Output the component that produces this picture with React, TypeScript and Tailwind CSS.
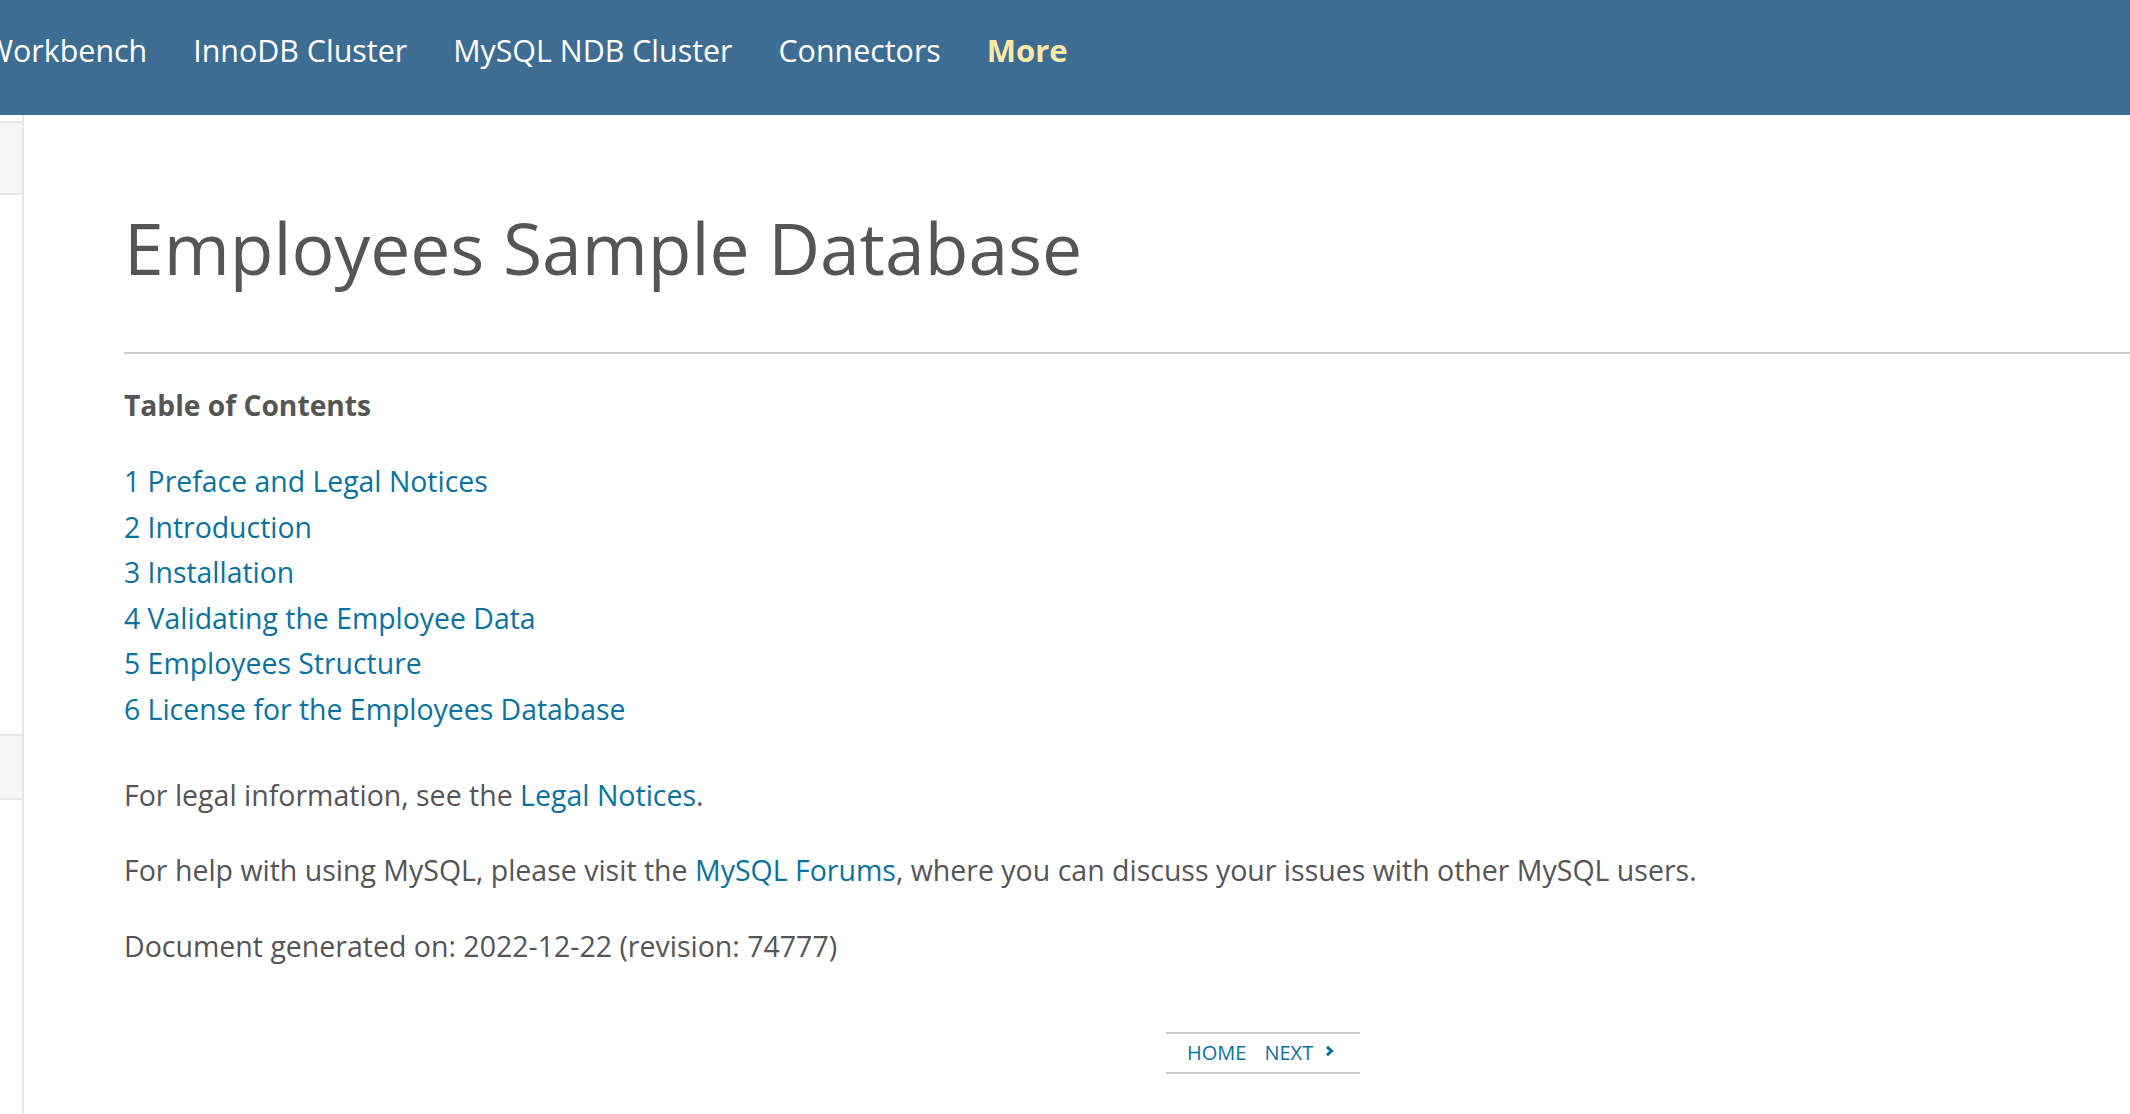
import React from 'react';

const navItems = ['Workbench', 'InnoDB Cluster', 'MySQL NDB Cluster', 'Connectors'];

const tocItems = [
  '1 Preface and Legal Notices',
  '2 Introduction',
  '3 Installation',
  '4 Validating the Employee Data',
  '5 Employees Structure',
  '6 License for the Employees Database',
];

export default function App() {
  return (
    <div className="min-h-[1114px] w-full overflow-hidden bg-white font-['Open_Sans',sans-serif]">
      {/* top nav */}
      <nav className="h-[115px] bg-[#3e6d94] pt-[30px]">
        <ul className="ml-[-15px] flex items-baseline gap-[46px] text-[30.4px] leading-[40px] text-white whitespace-nowrap">
          {navItems.map((item) => (
            <li key={item}>
              <a href="#">{item}</a>
            </li>
          ))}
          <li>
            <a href="#" className="text-[31px] font-bold text-[#fbeaa6]">
              More
            </a>
          </li>
        </ul>
      </nav>

      <div className="flex">
        {/* left sidebar (cut off) */}
        <aside className="w-[24px] shrink-0 border-r-2 border-[#e6e6e6] min-h-[999px]">
          <div className="mt-[6px] h-[74px] border-y-2 border-[#e8e8e8] bg-[#f5f5f5]" />
          <div className="mt-[539px] h-[66px] border-y-2 border-[#e8e8e8] bg-[#f5f5f5]" />
        </aside>

        {/* main content */}
        <main className="flex-1 pl-[100px] pt-[90px] text-[#555]">
          <h1 className="text-[71.4px] leading-[86px] font-normal whitespace-nowrap">
            Employees Sample Database
          </h1>
          <hr className="mt-[61px] h-[2px] border-0 bg-[#cccccc]" />

          <p className="mt-[33px] text-[28.2px] leading-[36px] font-bold">Table of Contents</p>

          <ul className="mt-[36px] text-[28.4px] leading-[45.5px]">
            {tocItems.map((item) => (
              <li key={item}>
                <a href="#" className="text-[#0a72a0]">
                  {item}
                </a>
              </li>
            ))}
          </ul>

          <p className="mt-[41px] text-[28.5px] leading-[45px]">
            For legal information, see the{' '}
            <a href="#" className="text-[#0a72a0]">
              Legal Notices
            </a>
            .
          </p>
          <p className="mt-[30px] text-[28.5px] leading-[45px]">
            For help with using MySQL, please visit the{' '}
            <a href="#" className="text-[#0a72a0]">
              MySQL Forums
            </a>
            , where you can discuss your issues with other MySQL users.
          </p>
          <p className="mt-[31px] text-[28.5px] leading-[45px]">
            Document generated on: 2022-12-22 (revision: 74777)
          </p>

          <div className="ml-[1042px] mt-[63px] flex w-[194px] items-center border-y-2 border-[#cccccc] pl-[21px] text-[20px] leading-[38px] text-[#0a72a0]">
            <a href="#">HOME</a>
            <a href="#" className="ml-[18px]">
              NEXT
            </a>
            <svg className="ml-[12px] mb-[5px]" width="9" height="12" viewBox="0 0 9 12">
              <path d="M2 1.8 L6.6 6 L2 10.2" fill="none" stroke="currentColor" strokeWidth="3" />
            </svg>
          </div>
        </main>
      </div>
    </div>
  );
}
